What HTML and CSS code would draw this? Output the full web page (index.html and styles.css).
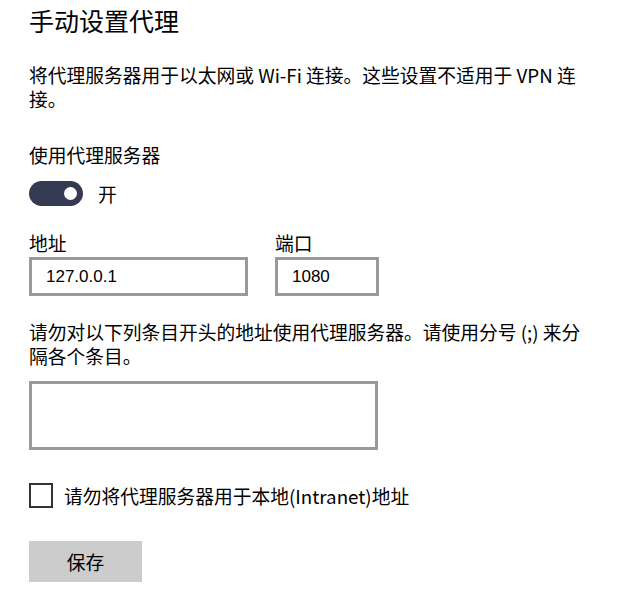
FILE: index.html
```html
<!DOCTYPE html>
<html lang="zh-CN">
<head>
  <meta charset="UTF-8">
  <title>手动设置代理</title>
  <link rel="stylesheet" href="styles.css">
</head>
<body>
  <main class="page">
    <h1>手动设置代理</h1>
    <p class="desc">将代理服务器用于以太网或 Wi-Fi 连接。这些设置不适用于 VPN 连接。</p>

    <div class="label switch-label">使用代理服务器</div>
    <div class="switch-row">
      <span class="toggle"><span class="knob"></span></span>
      <span class="switch-text">开</span>
    </div>

    <div class="fields">
      <div class="field">
        <label class="label" for="addr">地址</label>
        <input class="box addr" id="addr" type="text" value="127.0.0.1">
      </div>
      <div class="field">
        <label class="label" for="port">端口</label>
        <input class="box port" id="port" type="text" value="1080">
      </div>
    </div>

    <p class="desc exceptions">请勿对以下列条目开头的地址使用代理服务器。请使用分号 (;) 来分隔各个条目。</p>
    <textarea class="box area"></textarea>

    <label class="check-row">
      <span class="check"></span>
      <span>请勿将代理服务器用于本地(Intranet)地址</span>
    </label>

    <button class="save">保存</button>
  </main>
</body>
</html>
```

FILE: styles.css
```css
:root {
  --text: #000;
  --border: #999;
  --toggle: #343a52;
  --btn: #cccccc;
}
* { margin: 0; padding: 0; box-sizing: border-box; }
body {
  background: #fff;
  color: var(--text);
  font-family: "Noto Sans CJK SC", "Noto Sans", sans-serif;
  font-size: 18.75px;
}
.page {
  padding: 4px 29px 0;
  display: flex;
  flex-direction: column;
  align-items: flex-start;
}
h1 {
  font-size: 25px;
  font-weight: normal;
  line-height: 32px;
}
.desc {
  max-width: 565px;
  line-height: 24px;
  margin-top: 27px;
}
.label {
  display: block;
  line-height: 24px;
}
.switch-label { margin-top: 32px; }
.switch-row {
  display: flex;
  align-items: center;
  gap: 15px;
  margin-top: 14px;
  height: 25px;
}
.toggle {
  width: 54px;
  height: 25px;
  border-radius: 13px;
  background: var(--toggle);
  display: flex;
  align-items: center;
  justify-content: flex-end;
  padding-right: 6px;
}
.knob {
  width: 13px;
  height: 13px;
  border-radius: 50%;
  background: #fff;
}
.switch-text { line-height: 25px; }
.fields {
  display: flex;
  gap: 27px;
  margin-top: 25px;
}
.field .label { margin-bottom: 2px; }
.box {
  border: 3px solid var(--border);
  background: #fff;
  outline: none;
  font-family: "Liberation Sans", Arial, sans-serif;
  font-size: 17px;
  color: var(--text);
}
input.box {
  height: 39px;
  padding: 0 12px 0 14px;
}
.addr { width: 219px; }
.port { width: 104px; padding-left: 12px; }
.exceptions { margin-top: 24px; }
.area {
  display: block;
  width: 349px;
  height: 69px;
  margin-top: 13px;
  resize: none;
}
.check-row {
  display: flex;
  align-items: center;
  gap: 11px;
  margin-top: 33px;
  height: 25px;
  line-height: 24px;
}
.check {
  width: 24px;
  height: 25px;
  border: 2px solid #333;
  background: #fff;
}
.save {
  margin-top: 33px;
  width: 113px;
  height: 41px;
  border: none;
  background: var(--btn);
  font-family: inherit;
  font-size: 18.75px;
  color: var(--text);
}
```
